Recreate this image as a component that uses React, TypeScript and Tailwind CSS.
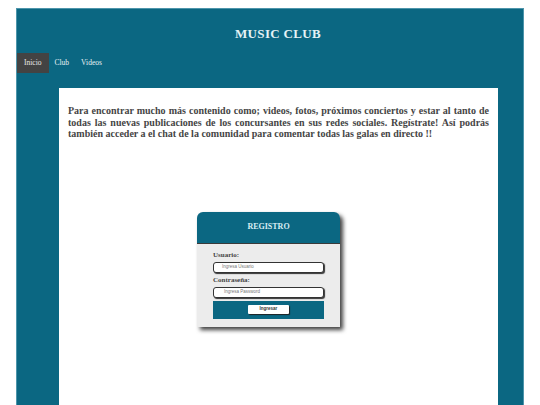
const serif = { fontFamily: '"Liberation Serif", "Times New Roman", serif' };
const sans = { fontFamily: '"Liberation Sans", Arial, sans-serif' };

const navItems = [
  { label: 'Inicio', active: true },
  { label: 'Club', active: false },
  { label: 'Videos', active: false },
];

export default function App() {
  return (
    <div className="h-[405px] overflow-hidden bg-white pl-[16px] pr-[16px] pt-[8px]" style={serif}>
      <div className="h-[420px] border border-[#4d95ab] bg-[#0b6782]">
        <header className="flex h-[44px] items-center justify-center pl-[16px] pt-[6px]">
          <h1 className="text-[13px] font-bold tracking-wide text-[#e4f3f6]">MUSIC CLUB</h1>
        </header>

        <nav className="flex h-[20px] items-stretch">
          {navItems.map((item) => (
            <a
              key={item.label}
              href="#"
              className={
                item.active
                  ? 'flex items-center bg-[#434343] px-[7px] text-[7.5px] text-[#e8e8e8]'
                  : 'flex items-center px-[6px] text-[7.5px] text-[#e8f2f5]'
              }
            >
              {item.label}
            </a>
          ))}
        </nav>

        <main className="ml-[42px] mt-[15px] h-[340px] w-[439px] bg-white px-[9px] pt-[17px]">
          <p className="text-justify text-[10px] font-bold leading-[11.5px] text-[#454545]">
            Para encontrar mucho más contenido como; videos, fotos, próximos conciertos y estar al tanto de
            todas las nuevas publicaciones de los concursantes en sus redes sociales. Regístrate! Así podrás
            también acceder a el chat de la comunidad para comentar todas las galas en directo !!
          </p>

          <div className="ml-[129px] mt-[72px] w-[143px] rounded-t-[6px] bg-[#ececec] shadow-[3px_3px_4px_rgba(0,0,0,0.75)]">
            <div className="flex h-[32px] items-center justify-center rounded-t-[6px] border-b border-[#3a3a3a] bg-[#0b6782]">
              <span className="text-[8px] font-bold text-[#d9eef3]">REGISTRO</span>
            </div>
            <div className="px-[16px] pb-[8px] pt-[7px]">
              <label className="block text-[7px] font-bold leading-[9px] text-[#444]">Usuario:</label>
              <div className="mt-[2px] flex h-[11px] items-center rounded-[3px] border border-[#333] bg-white pl-[8px] shadow-[1px_1px_1px_#333]">
                <span className="text-[4.5px] text-[#777]" style={sans}>
                  Ingresa Usuario
                </span>
              </div>
              <label className="mt-[3px] block text-[7px] font-bold leading-[9px] text-[#444]">Contraseña:</label>
              <div className="mt-[2px] flex h-[11px] items-center rounded-[3px] border border-[#333] bg-white pl-[10px] shadow-[1px_1px_1px_#333]">
                <span className="text-[4.5px] text-[#777]" style={sans}>
                  Ingresa Password
                </span>
              </div>
              <div className="mt-[3px] flex h-[18px] items-center justify-center bg-[#0b6782]">
                <button
                  className="flex h-[9px] w-[41px] items-center justify-center rounded-[1px] bg-white text-[4.5px] font-bold text-[#333] shadow-[1px_1px_1px_#222]"
                  style={sans}
                >
                  Ingresar
                </button>
              </div>
            </div>
          </div>
        </main>
      </div>
    </div>
  );
}
